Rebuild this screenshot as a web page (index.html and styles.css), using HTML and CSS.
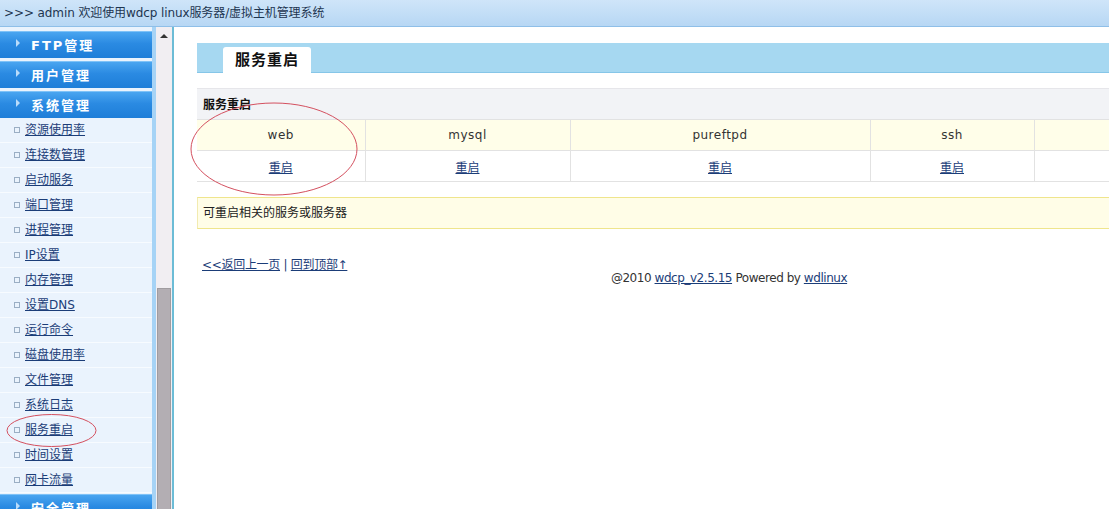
FILE: index.html
```html
<!DOCTYPE html>
<html lang="zh-CN">
<head>
<meta charset="utf-8">
<title>wdcp</title>
<link rel="stylesheet" href="styles.css">
</head>
<body>
<div class="topbar">&gt;&gt;&gt; admin 欢迎使用wdcp linux服务器/虚拟主机管理系统</div>
<div class="frames">
  <div class="sideframe">
    <nav class="sidebar">
      <div class="menu-head"><span class="tri"></span>FTP管理</div>
      <div class="menu-head"><span class="tri"></span>用户管理</div>
      <div class="menu-head"><span class="tri"></span>系统管理</div>
      <ul class="menu-list">
        <li><a href="#">资源使用率</a></li>
        <li><a href="#">连接数管理</a></li>
        <li><a href="#">启动服务</a></li>
        <li><a href="#">端口管理</a></li>
        <li><a href="#">进程管理</a></li>
        <li><a href="#">IP设置</a></li>
        <li><a href="#">内存管理</a></li>
        <li><a href="#">设置DNS</a></li>
        <li><a href="#">运行命令</a></li>
        <li><a href="#">磁盘使用率</a></li>
        <li><a href="#">文件管理</a></li>
        <li><a href="#">系统日志</a></li>
        <li><a href="#">服务重启</a></li>
        <li><a href="#">时间设置</a></li>
        <li><a href="#">网卡流量</a></li>
      </ul>
      <div class="menu-head last"><span class="tri"></span>安全管理</div>
    </nav>
    <div class="strip"></div>
    <div class="scrollbar">
      <div class="sb-up"></div>
      <div class="sb-track"></div>
      <div class="sb-thumb"></div>
    </div>
    <div class="frame-edge"></div>
  </div>
  <main class="main">
    <div class="content">
      <div class="tabbar"><div class="tab">服务重启</div></div>
      <div class="sec-head">服务重启</div>
      <table class="svc">
        <tr class="names">
          <td class="c1">web</td>
          <td class="c2">mysql</td>
          <td class="c3">pureftpd</td>
          <td class="c4">ssh</td>
          <td class="c5"></td>
        </tr>
        <tr class="acts">
          <td><a href="#">重启</a></td>
          <td><a href="#">重启</a></td>
          <td><a href="#">重启</a></td>
          <td><a href="#">重启</a></td>
          <td></td>
        </tr>
      </table>
      <div class="note">可重启相关的服务或服务器</div>
      <div class="backlinks"><a href="#">&lt;&lt;返回上一页</a> | <a href="#">回到顶部↑</a></div>
      <div class="footer">@2010 <a href="#">wdcp_v2.5.15</a> Powered by <a href="#">wdlinux</a></div>
    </div>
  </main>
</div>
<svg class="marks" width="1109" height="509" viewBox="0 0 1109 509">
  <ellipse cx="274" cy="149" rx="83" ry="46" fill="none" stroke="#d4505f" stroke-width="1"/>
  <ellipse cx="51.5" cy="430.5" rx="44.5" ry="16" fill="none" stroke="#d4505f" stroke-width="1"/>
</svg>
</body>
</html>
```
FILE: styles.css
```css
html, body {
  margin: 0;
  padding: 0;
  height: 100%;
  overflow: hidden;
}
body {
  font-family: "DejaVu Sans", "Noto Sans CJK SC", sans-serif;
  font-size: 12px;
  color: #333;
  background: #fff;
  position: relative;
}
a { color: #1b3d78; }

.topbar {
  height: 27px;
  line-height: 26px;
  padding-left: 4px;
  box-sizing: border-box;
  background: linear-gradient(#cfe5f9, #b7d7f4);
  border-bottom: 1px solid #8fbfe8;
  color: #1d3550;
  font-size: 12px;
  letter-spacing: -0.1px;
  white-space: nowrap;
}

.frames {
  display: flex;
  height: calc(100% - 27px);
}
.sideframe {
  display: flex;
  flex: 0 0 175px;
  background: #eaf3fd;
}
.sidebar {
  width: 152px;
  padding-top: 4px;
  background: #eaf3fd;
  overflow: hidden;
}
.menu-head {
  height: 27px;
  line-height: 27px;
  margin-bottom: 3px;
  box-sizing: border-box;
  background: linear-gradient(#4aa5f0, #2a8ae2 45%, #1e7ed8);
  border-top: 1px solid #7fc2f7;
  color: #fff;
  font-weight: bold;
  font-size: 13px;
  letter-spacing: 2px;
  padding-left: 16px;
  display: flex;
  align-items: center;
}
.menu-head.last { margin-top: 1px; }
.tri {
  width: 0;
  height: 0;
  border-left: 4px solid #b9dcfb;
  border-top: 4px solid transparent;
  border-bottom: 4px solid transparent;
  margin-right: 11px;
  margin-top: -4px;
}
.menu-list {
  list-style: none;
  margin: -3px 0 0;
  padding: 0;
}
.menu-list li {
  height: 25px;
  line-height: 24px;
  border-bottom: 1px solid #f7fbff;
  box-sizing: border-box;
  padding-left: 14px;
  display: flex;
  align-items: center;
}
.menu-list li::before {
  content: "";
  width: 4px;
  height: 4px;
  border: 1px solid #9aaec4;
  margin-right: 5px;
}
.menu-list a {
  color: #1b3d78;
  font-size: 12px;
}

.strip {
  width: 4px;
  background: #a6d3f6;
}
.scrollbar {
  width: 16px;
  position: relative;
  background: #f1eef2;
  display: flex;
  flex-direction: column;
}
.sb-up {
  height: 18px;
  position: relative;
}
.sb-up::after {
  content: "";
  position: absolute;
  left: 4px;
  top: 7px;
  border-bottom: 4px solid #333;
  border-left: 4px solid transparent;
  border-right: 4px solid transparent;
}
.sb-track { height: 243px; }
.sb-thumb {
  flex: 1;
  margin: 0 1px 0 1px;
  background: #b3aeb3;
  border: 1px solid #a09ca0;
  border-bottom: none;
}
.frame-edge {
  width: 3px;
  background: #fff;
  border-left: 2px solid #6cbcd6;
  box-sizing: border-box;
}

.main {
  flex: 1;
  overflow: hidden;
  background: #fff;
}
.content {
  width: 1064px;
  padding: 16px 0 0 22px;
}
.tabbar {
  height: 30px;
  background: #a6d8f1;
  border-bottom: 1px solid #86c6e8;
  box-sizing: border-box;
  padding: 4px 0 0 26px;
  display: flex;
}
.tab {
  width: 88px;
  height: 26px;
  background: #fff;
  border-radius: 3px 3px 0 0;
  box-sizing: border-box;
  font-weight: bold;
  font-size: 15px;
  letter-spacing: 1px;
  line-height: 27px;
  text-align: center;
  color: #111;
  margin-bottom: -1px;
}
.sec-head {
  margin-top: 15px;
  height: 31px;
  line-height: 33px;
  background: #f2f3f6;
  border-top: 1px solid #e6e6ea;
  box-sizing: border-box;
  padding-left: 6px;
  font-weight: bold;
  color: #111;
}
.svc {
  width: 100%;
  border-collapse: collapse;
  table-layout: fixed;
}
.svc td {
  height: 31px;
  padding: 0;
  text-align: center;
  border: 1px solid #e2e2e2;
  border-top: none;
  box-sizing: border-box;
}
.svc td:first-child { border-left: none; }
.svc td:last-child { border-right: none; }
.svc .names td {
  background: #fffee9;
  color: #333;
  letter-spacing: 0.5px;
  border-top: 1px solid #e2e2e2;
}
.svc .c1 { width: 168px; }
.svc .c2 { width: 205px; }
.svc .c3 { width: 300px; }
.svc .c4 { width: 164px; }
.svc .acts a { color: #1b3d78; }
.note {
  margin-top: 15px;
  height: 32px;
  line-height: 31px;
  box-sizing: border-box;
  background: #fffde7;
  border-top: 1px solid #efe58c;
  border-bottom: 1px solid #efe58c;
  border-left: 1px solid #f2ebb0;
  padding-left: 5px;
  color: #222;
}
.backlinks {
  margin-top: 29px;
  padding-left: 5px;
  line-height: 14px;
  letter-spacing: -0.3px;
  color: #1b3d78;
}
.footer {
  text-align: center;
  line-height: 13px;
  letter-spacing: -0.45px;
  color: #333;
}
.footer a { color: #1b3d78; }

.marks {
  position: absolute;
  left: 0;
  top: 0;
  pointer-events: none;
}
```
